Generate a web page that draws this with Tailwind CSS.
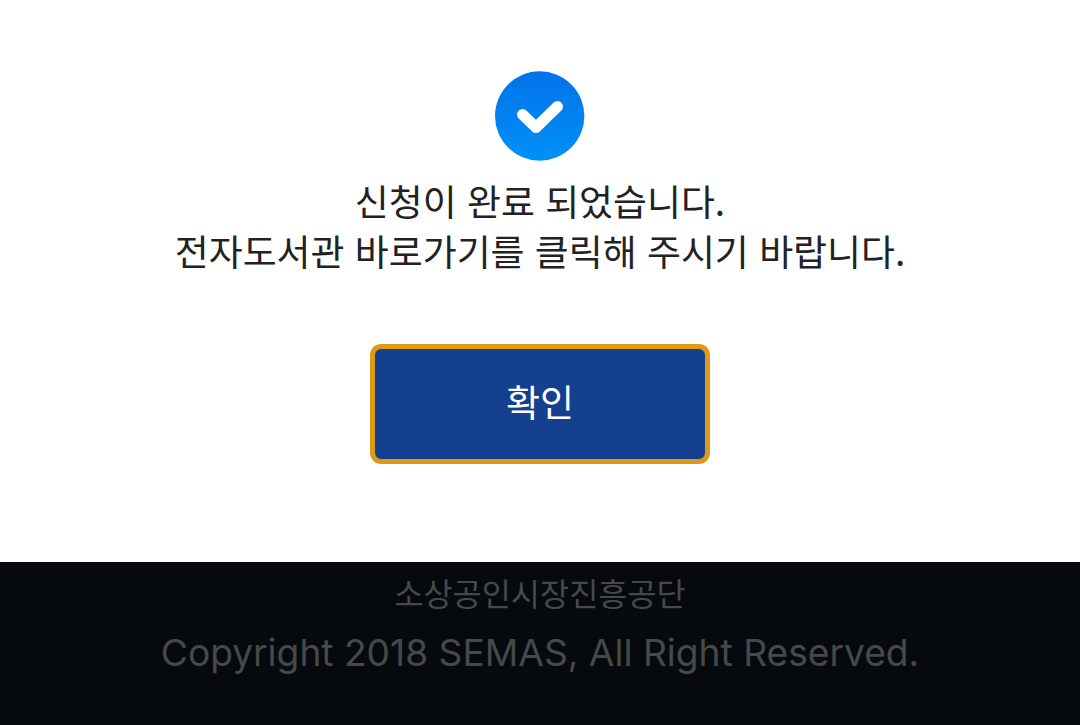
<!DOCTYPE html>
<html lang="ko">
<head>
    <meta charset="UTF-8">
    <meta name="viewport" content="width=device-width, initial-scale=1.0">
    <title>신청 완료</title>
    <script src="https://cdn.jsdelivr.net/npm/@tailwindcss/browser@4"></script>
</head>
<body class="bg-white font-['Noto_Sans_CJK_KR',sans-serif]">
    <div class="h-[725px] flex flex-col overflow-hidden">
        <!-- Completion message -->
        <main class="h-[562px] shrink-0 flex flex-col items-center pt-[71px]">
            <svg class="w-[90px] h-[90px]" viewBox="0 0 90 90" fill="none">
                <defs>
                    <linearGradient id="badge" x1="0" y1="0" x2="0" y2="1">
                        <stop offset="0" stop-color="#0073e9"/>
                        <stop offset="1" stop-color="#0090f8"/>
                    </linearGradient>
                </defs>
                <circle cx="44.700" cy="45" r="44.700" fill="url(#badge)"/>
                <path d="M27.500 43.500L41 56.500L62.500 35.500" stroke="#fff" stroke-width="11" stroke-linecap="round" stroke-linejoin="round"/>
            </svg>
            <p class="mt-[14px] text-center text-[36.900px] leading-[50px] text-[#222] whitespace-nowrap">신청이 완료 되었습니다.<br>전자도서관 바로가기를 클릭해 주시기 바랍니다.</p>
            <button class="mt-[69px] w-[340px] h-[120px] pb-[4px] rounded-[11px] border-[5px] border-[#de9a14] bg-[#153f8f] text-[37px] text-white">확인</button>
        </main>

        <!-- Footer -->
        <footer class="flex-1 bg-[#060a0e] text-center text-[#474949]">
            <p class="pt-[5px] text-[31.700px] leading-[50px]">소상공인시장진흥공단</p>
            <p class="mt-[11px] font-['Inter',sans-serif] text-[37.150px] leading-[50px]">Copyright 2018 SEMAS, All Right Reserved.</p>
        </footer>
    </div>
</body>
</html>
